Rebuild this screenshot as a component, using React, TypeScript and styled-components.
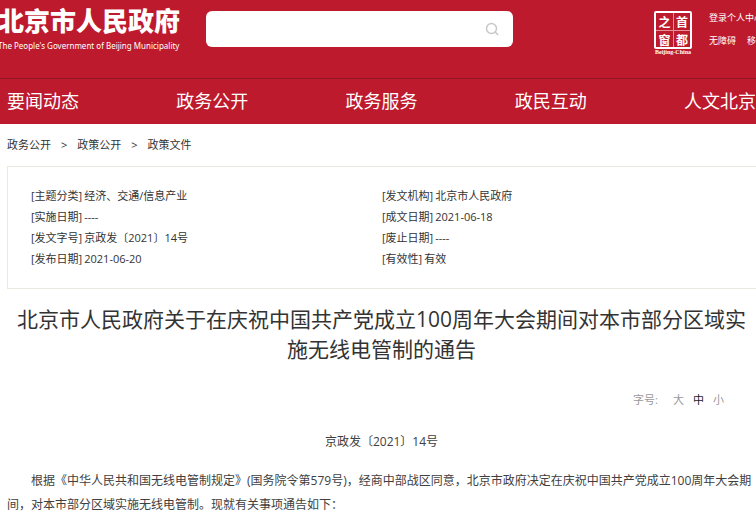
import React from "react";
import styled, { createGlobalStyle } from "styled-components";

const GlobalStyle = createGlobalStyle`
  *, *::before, *::after { box-sizing: border-box; }
  html, body { margin: 0; overflow-x: hidden; }
  body {
    background: #fff;
    color: #333;
    font-family: "Open Sans", "Noto Sans CJK SC", sans-serif;
    font-size: 11px;
    line-height: 21px;
  }
  a { color: inherit; text-decoration: none; }
  h1, p, ul, ol, dl, dd { margin: 0; padding: 0; }
  ul, ol { list-style: none; }
  button, input { font: inherit; }
`;

const Header = styled.header`
  background: #be1a2d;
  color: #fff;
  overflow: hidden;
`;

const TopBar = styled.div`
  display: flex;
  align-items: flex-start;
  height: 78px;
`;

const Brand = styled.a`
  flex: none;
  width: 206px;
  margin-left: -2px;
  padding-top: 6px;
  white-space: nowrap;
`;

const BrandName = styled.span`
  display: block;
  font-size: 26px;
  line-height: 30px;
  font-weight: 900;
`;

const BrandEnglish = styled.span`
  display: block;
  font-family: "Noto Sans", sans-serif;
  font-size: 8px;
  line-height: 20px;
`;

const Search = styled.form`
  display: flex;
  align-items: center;
  flex: none;
  width: 307px;
  height: 36px;
  margin: 11px 140px 0 2px;
  padding: 0 14px;
  border-radius: 6px;
  background: #fff;
`;

const SearchInput = styled.input`
  flex: 1;
  min-width: 0;
  border: 0;
  outline: 0;
  padding: 0;
  background: transparent;
  color: #333;
`;

const SearchButton = styled.button`
  display: flex;
  border: 0;
  padding: 0;
  background: none;
  color: #c8c8c8;
  cursor: pointer;
`;

const Seal = styled.a`
  flex: none;
  display: flex;
  flex-direction: column;
  align-items: center;
  width: 40px;
  margin: 11px 16px 0 0;
`;

const SealFrame = styled.span`
  display: grid;
  grid-template-columns: 1fr 1fr;
  grid-template-rows: 1fr 1fr;
  width: 38px;
  height: 38px;
  border: 2px solid #fff;
  border-radius: 2px;
`;

const SealGlyph = styled.span<{ $right?: boolean; $bottom?: boolean }>`
  display: flex;
  align-items: center;
  justify-content: center;
  border-left: ${(p) => (p.$right ? "1px solid #e58f99" : "0")};
  border-top: ${(p) => (p.$bottom ? "1px solid #e58f99" : "0")};
  font-family: "Noto Sans CJK SC", sans-serif;
  font-size: 12px;
  line-height: 15px;
  font-weight: 700;
`;

const SealCaption = styled.span`
  font-family: "Liberation Serif", serif;
  font-size: 6px;
  line-height: 7px;
  font-weight: 700;
`;

const UserLinks = styled.div`
  display: grid;
  grid-template-columns: auto auto;
  justify-content: start;
  column-gap: 11px;
  padding-top: 6px;
  font-size: 9px;
  line-height: 23px;
  white-space: nowrap;
`;

const UserLink = styled.a<{ $wide?: boolean }>`
  grid-column: ${(p) => (p.$wide ? "1 / -1" : "auto")};
`;

const Nav = styled.nav`
  border-top: 1px solid #8f1424;
  padding-left: 7px;
`;

const NavList = styled.ul`
  display: flex;
  height: 45px;
  font-size: 18px;
  line-height: 45px;
  white-space: nowrap;
`;

const NavItem = styled.li`
  flex: 0 0 22.6%;
`;

const Main = styled.main`
  padding-left: 7px;
`;

const Crumbs = styled.ol`
  display: flex;
  gap: 10px;
  padding: 10px 0 11px;
`;

const Info = styled.dl`
  display: grid;
  grid-template-columns: 1fr 1fr;
  padding: 18px 23px 19px;
  border: 1px solid #e9e9dd;
  border-right: 0;
`;

const InfoItem = styled.div`
  display: flex;
  gap: 2px;
`;

const Label = styled.dt`
  flex: none;
`;

const Title = styled.h1`
  margin-top: 15px;
  font-size: 21px;
  line-height: 30px;
  font-weight: 400;
  text-align: center;
`;

const SizeBar = styled.div`
  display: flex;
  justify-content: flex-end;
  gap: 9px;
  margin-top: 25px;
  padding-right: 32px;
  color: #999;
`;

const SizeLabel = styled.span`
  margin-right: 6px;
`;

const SizeButton = styled.button<{ $active?: boolean }>`
  border: 0;
  padding: 0;
  background: none;
  cursor: pointer;
  color: ${(p) => (p.$active ? "#222" : "#999")};
`;

const Article = styled.article`
  margin-top: 20px;
  color: #404040;
  font-size: 12px;
  line-height: 24px;
`;

const DocNumber = styled.p`
  text-align: center;
  margin-bottom: 15px;
`;

const Paragraph = styled.p`
  text-indent: 2em;
`;

const navItems = ["要闻动态", "政务公开", "政务服务", "政民互动", "人文北京"];

const info = [
  ["主题分类", "经济、交通/信息产业"],
  ["发文机构", "北京市人民政府"],
  ["实施日期", "----"],
  ["成文日期", "2021-06-18"],
  ["发文字号", "京政发〔2021〕14号"],
  ["废止日期", "----"],
  ["发布日期", "2021-06-20"],
  ["有效性", "有效"],
];

export default function App() {
  return (
    <div lang="zh-CN">
      <GlobalStyle />
      <Header>
        <TopBar>
          <Brand href="#">
            <BrandName>北京市人民政府</BrandName>
            <BrandEnglish>The People's Government of Beijing Municipality</BrandEnglish>
          </Brand>
          <Search role="search" onSubmit={(e) => e.preventDefault()}>
            <SearchInput type="text" aria-label="搜索" />
            <SearchButton type="submit" aria-label="搜索">
              <svg width="14" height="14" viewBox="0 0 14 14" fill="none" stroke="currentColor" strokeWidth="1.5" strokeLinecap="round">
                <circle cx="6.5" cy="6.5" r="5" />
                <path d="M10.3 10.3 12.7 12.4" />
              </svg>
            </SearchButton>
          </Search>
          <Seal href="#">
            <SealFrame>
              <SealGlyph>之</SealGlyph>
              <SealGlyph $right>首</SealGlyph>
              <SealGlyph $bottom>窗</SealGlyph>
              <SealGlyph $right $bottom>都</SealGlyph>
            </SealFrame>
            <SealCaption>Beijing-China</SealCaption>
          </Seal>
          <UserLinks>
            <UserLink $wide href="#">登录个人中心</UserLink>
            <UserLink href="#">无障碍</UserLink>
            <UserLink href="#">移动版</UserLink>
          </UserLinks>
        </TopBar>
        <Nav>
          <NavList>
            {navItems.map((t) => (
              <NavItem key={t}><a href="#">{t}</a></NavItem>
            ))}
          </NavList>
        </Nav>
      </Header>
      <Main>
        <Crumbs>
          <li><a href="#">政务公开</a></li>
          <li>&gt;</li>
          <li><a href="#">政策公开</a></li>
          <li>&gt;</li>
          <li><a href="#">政策文件</a></li>
        </Crumbs>
        <Info>
          {info.map(([label, value]) => (
            <InfoItem key={label}>
              <Label>[{label}]</Label>
              <dd>{value}</dd>
            </InfoItem>
          ))}
        </Info>
        <Title>北京市人民政府关于在庆祝中国共产党成立100周年大会期间对本市部分区域实施无线电管制的通告</Title>
        <SizeBar>
          <SizeLabel>字号:</SizeLabel>
          <SizeButton type="button">大</SizeButton>
          <SizeButton type="button" $active>中</SizeButton>
          <SizeButton type="button">小</SizeButton>
        </SizeBar>
        <Article>
          <DocNumber>京政发〔2021〕14号</DocNumber>
          <Paragraph>
            根据《中华人民共和国无线电管制规定》(国务院令第579号)，经商中部战区同意，北京市政府决定在庆祝中国共产党成立100周年大会期间，对本市部分区域实施无线电管制。现就有关事项通告如下：
          </Paragraph>
        </Article>
      </Main>
    </div>
  );
}
